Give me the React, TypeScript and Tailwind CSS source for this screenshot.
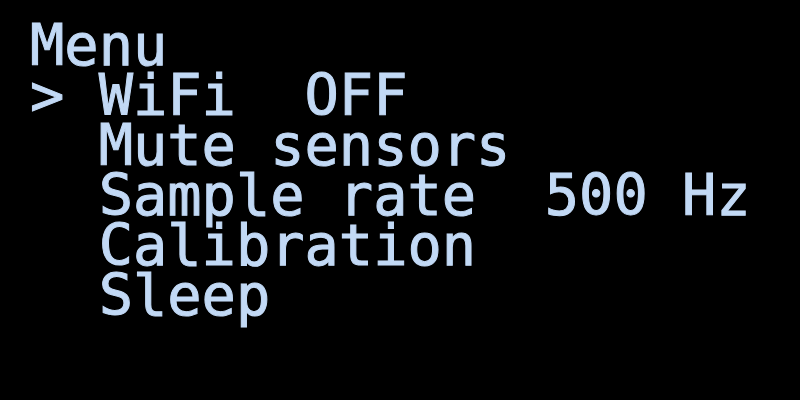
export default function App() {
  const lines = ["Menu", "> WiFi  OFF", "  Mute sensors", "  Sample rate  500 Hz", "  Calibration", "  Sleep"];
  return (
    <div className="w-[800px] h-[400px] bg-black overflow-hidden">
      <div className="pt-[20px] pl-[30px] text-[#c2d9f5] text-[57px] leading-[50px] whitespace-pre font-['DejaVu_Sans_Mono',monospace] [-webkit-text-stroke:1px_#c2d9f5]">
        {lines.map((l, i) => (
          <div key={i}>{l}</div>
        ))}
      </div>
    </div>
  );
}
